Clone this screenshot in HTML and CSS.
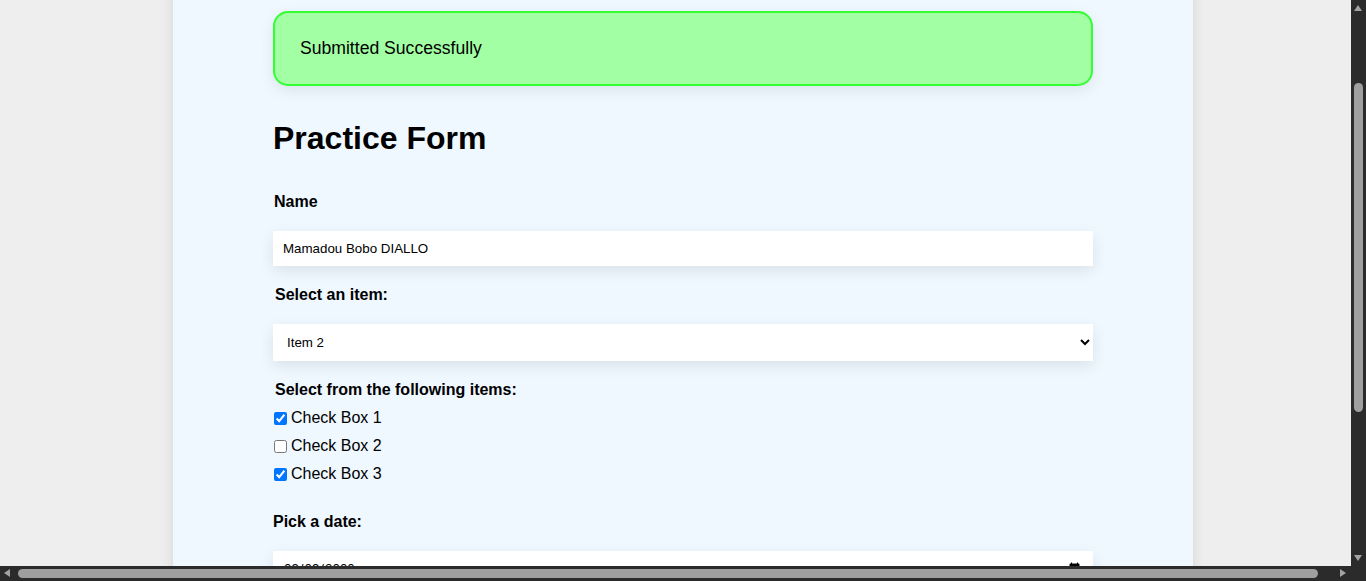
FILE: index.html
```html
<!DOCTYPE html>
<html lang="en">
<head>
<meta charset="utf-8">
<title>Practice Form</title>
<link rel="stylesheet" href="styles.css">
</head>
<body>
<main class="page">
  <div class="alert">Submitted Successfully</div>
  <h1 class="title">Practice Form</h1>
  <form class="form">
    <label class="label" for="name">Name</label>
    <input class="field" id="name" type="text" value="Mamadou Bobo DIALLO">

    <label class="label label-shift" for="item">Select an item:</label>
    <select class="field field-select" id="item">
      <option>Item 1</option>
      <option selected>Item 2</option>
      <option>Item 3</option>
    </select>

    <div class="label label-shift label-tight">Select from the following items:</div>
    <div class="checks">
      <label class="check"><input type="checkbox" checked> Check Box 1</label>
      <label class="check"><input type="checkbox"> Check Box 2</label>
      <label class="check"><input type="checkbox" checked> Check Box 3</label>
    </div>

    <label class="label label-date" for="date">Pick a date:</label>
    <input class="field" id="date" type="date" value="2000-09-09">

    <button class="submit" type="button">Submit</button>
  </form>
</main>

<div class="sb sb-v" aria-hidden="true">
  <span class="arrow arrow-up"></span>
  <span class="thumb thumb-v"></span>
  <span class="arrow arrow-down"></span>
</div>
<div class="sb sb-h" aria-hidden="true">
  <span class="arrow arrow-left"></span>
  <span class="thumb thumb-h"></span>
  <span class="arrow arrow-right"></span>
</div>
<script src="script.js"></script>
</body>
</html>
```
FILE: styles.css
```css
html {
  color-scheme: dark;
  background: #eeeeee;
}
body {
  color-scheme: light;
  margin: 0;
  width: 100vw;
  background: #eeeeee;
  font-family: "Liberation Sans", Arial, sans-serif;
  color: #000;
}
.page {
  width: 820px;
  margin: 0 auto;
  padding: 129px 100px 150px;
  background: #eff7ff;
  box-shadow: 0 0 12px rgba(0, 0, 0, 0.1);
}
.alert {
  border: 2px solid #33ff33;
  border-radius: 15px;
  background: #a3ffa3;
  padding: 25px;
  font-size: 17.6px;
  line-height: 21px;
  box-shadow: 0 5px 15px rgba(0, 0, 0, 0.08);
}
.title {
  margin: 34px 0 0;
  font-size: 32px;
  line-height: 37px;
  font-weight: bold;
}
.form {
  display: flex;
  flex-direction: column;
  margin-top: 35px;
}
.label {
  display: block;
  font-size: 16px;
  line-height: 18px;
  font-weight: bold;
  padding-top: 1px;
  margin: 0 0 20px 1px;
}
.label-shift {
  margin-left: 2px;
}
.label-tight {
  margin-bottom: 5px;
}
.label-date {
  margin-left: 0;
}
.field {
  box-sizing: border-box;
  width: 820px;
  height: 35px;
  border: none;
  outline: none;
  background: #ffffff;
  padding: 0 10px;
  margin: 0 0 19px;
  font-family: "Liberation Sans", Arial, sans-serif;
  font-size: 13.33px;
  color: #000;
  box-shadow: 0 5px 15px rgba(0, 0, 0, 0.09);
}
.field-select {
  height: 37px;
  padding: 0 6px 0 10px;
}
.checks {
  display: flex;
  flex-direction: column;
  margin-top: -1px;
  margin-bottom: 25px;
}
.check {
  display: flex;
  align-items: center;
  height: 28px;
  padding-top: 2px;
  box-sizing: border-box;
  font-size: 16px;
}
.check input {
  width: 13px;
  height: 13px;
  margin: 0 4px 0 1px;
}
.submit {
  align-self: flex-start;
  margin-top: 20px;
  padding: 10px 20px;
  border: none;
  border-radius: 6px;
  background: #0d6efd;
  color: #fff;
  font-family: "Liberation Sans", Arial, sans-serif;
  font-size: 16px;
}

/* browser scrollbars drawn over the page */
.sb {
  position: fixed;
  background: #2b2b2b;
  z-index: 10;
}
.sb-v {
  top: 0;
  right: 0;
  width: 15px;
  height: 581px;
}
.sb-h {
  left: 0;
  bottom: 0;
  width: 1351px;
  height: 15px;
}
.thumb {
  position: absolute;
  background: #9f9f9f;
  border-radius: 5px;
}
.thumb-v {
  left: 3px;
  top: 83px;
  width: 9px;
  height: 329px;
}
.thumb-h {
  top: 3px;
  left: 18px;
  width: 1300px;
  height: 9px;
}
.arrow {
  position: absolute;
  width: 0;
  height: 0;
  border: 0 solid transparent;
}
.arrow-up {
  left: 3px;
  top: 5px;
  border-width: 0 4.5px 6px;
  border-bottom-color: #a3a3a3;
}
.arrow-down {
  left: 3px;
  top: 555px;
  border-width: 6px 4.5px 0;
  border-top-color: #a3a3a3;
}
.arrow-left {
  left: 4px;
  top: 3px;
  border-width: 4.5px 6px 4.5px 0;
  border-right-color: #a3a3a3;
}
.arrow-right {
  left: 1340px;
  top: 3px;
  border-width: 4.5px 0 4.5px 6px;
  border-left-color: #a3a3a3;
}
```
FILE: script.js
```js
window.scrollTo(0, 118);
window.addEventListener('load', function () { window.scrollTo(0, 118); });
```
